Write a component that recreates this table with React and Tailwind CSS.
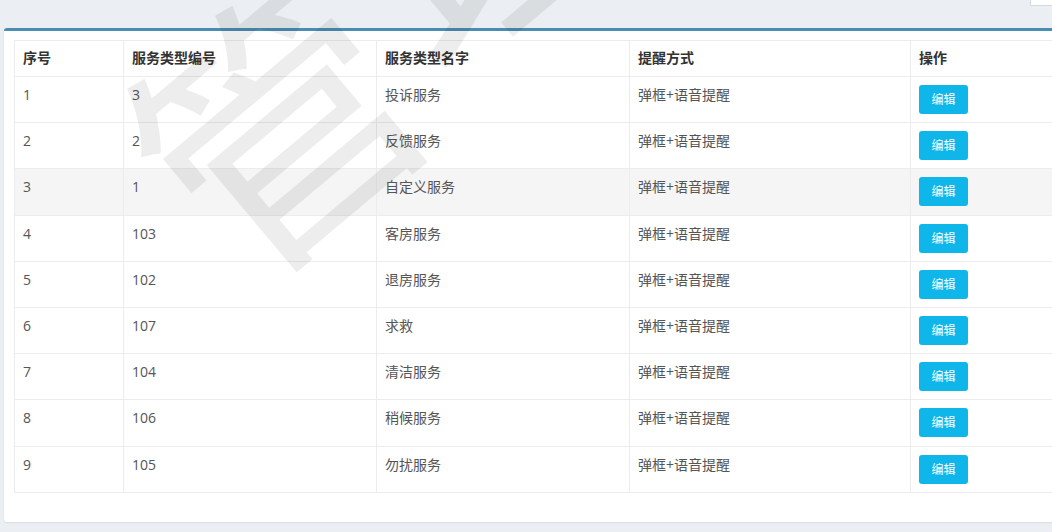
import React from 'react';

const rows = [
  { no: 1, code: '3', name: '投诉服务' },
  { no: 2, code: '2', name: '反馈服务' },
  { no: 3, code: '1', name: '自定义服务', hover: true },
  { no: 4, code: '103', name: '客房服务' },
  { no: 5, code: '102', name: '退房服务' },
  { no: 6, code: '107', name: '求救' },
  { no: 7, code: '104', name: '清洁服务' },
  { no: 8, code: '106', name: '稍候服务' },
  { no: 9, code: '105', name: '勿扰服务' },
];

const font = { fontFamily: '"Open Sans", "Noto Sans CJK SC", sans-serif' };

export default function App() {
  return (
    <div className="relative w-[1052px] h-[532px] overflow-hidden bg-[#ebeef2] text-[14px] text-[#555]" style={font}>
      {/* search box corner at top right */}
      <div className="absolute right-[-10px] top-[-4px] w-[32px] h-[10px] bg-white border border-[#d5d8dc]" />

      <div className="pt-[28px] pl-[4px]">
        <div className="w-[1070px] bg-white border-t-[3px] border-[#4b8cb3] rounded-[3px] shadow-[0_1px_2px_rgba(0,0,0,0.08)] px-[10px] pt-[9px] pb-[29px]">
          <table className="w-[1100px] border-collapse table-fixed border border-[#ececec]">
            <colgroup>
              <col className="w-[109px]" />
              <col className="w-[253px]" />
              <col className="w-[253px]" />
              <col className="w-[281px]" />
              <col />
            </colgroup>
            <thead>
              <tr className="h-[36px] text-left">
                {['序号', '服务类型编号', '服务类型名字', '提醒方式', '操作'].map((h) => (
                  <th key={h} className="px-[8px] pt-[7px] font-bold text-[#333] border-b border-r border-[#ececec] align-top leading-[20px]">
                    {h}
                  </th>
                ))}
              </tr>
            </thead>
            <tbody>
              {rows.map((r) => (
                <tr key={r.no} className={`h-[46.2px] ${r.hover ? 'bg-[#f5f5f5]' : ''}`}>
                  <td className="px-[8px] pt-[8px] align-top leading-[20px] border-b border-r border-[#ececec]">{r.no}</td>
                  <td className="px-[8px] pt-[8px] align-top leading-[20px] border-b border-r border-[#ececec]">{r.code}</td>
                  <td className="px-[8px] pt-[8px] align-top leading-[20px] border-b border-r border-[#ececec]">{r.name}</td>
                  <td className="px-[8px] pt-[8px] align-top leading-[20px] border-b border-r border-[#ececec]">弹框+语音提醒</td>
                  <td className="px-[8px] pt-[8px] pb-[8px] align-top border-b border-r border-[#ececec]">
                    <button className="w-[49px] h-[29px] rounded-[3px] bg-[#0fb6ea] text-white text-[12px] leading-[29px] text-center">
                      编辑
                    </button>
                  </td>
                </tr>
              ))}
            </tbody>
          </table>
        </div>
      </div>

      {/* watermark */}
      <div className="pointer-events-none absolute left-[140px] top-[-10px] rotate-[-40deg] text-[270px] leading-none font-normal text-black/[0.07] select-none">
        管
      </div>
      <div className="pointer-events-none absolute left-[340px] top-[-220px] rotate-[-40deg] text-[270px] leading-none font-normal text-black/[0.07] select-none">
        理
      </div>
    </div>
  );
}
